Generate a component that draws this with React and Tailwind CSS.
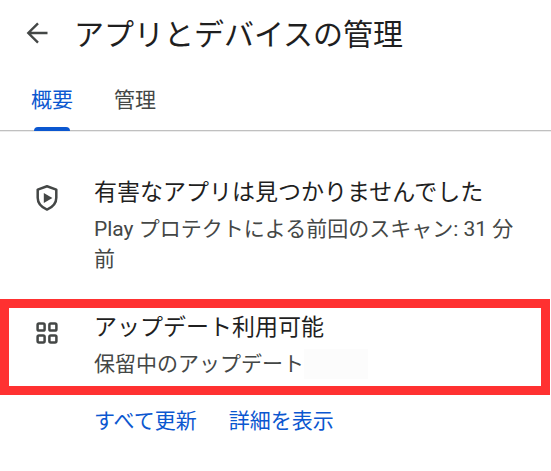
import React, { useState } from 'react';

const tabs = [
  { id: 'overview', label: '概要' },
  { id: 'manage', label: '管理' }
];

const BackIcon = () => (
  <svg className="h-6 w-6" viewBox="0 0 24 24" fill="none" stroke="currentColor" strokeWidth="2.4" aria-hidden="true">
    <path d="M21.5 12H2.5M12 2.3L2.3 12l9.7 9.7" />
  </svg>
);

const ShieldPlayIcon = () => (
  <svg className="h-7 w-6" viewBox="0 0 24 28" fill="none" aria-hidden="true">
    <path
      d="M12 2.3L21.3 5.6v8.2c0 5.2-3.8 9.5-9.3 11.8-5.5-2.3-9.3-6.6-9.3-11.8V5.6z"
      stroke="currentColor"
      strokeWidth="2.5"
      strokeLinejoin="round"
    />
    <path d="M8.8 9v10L17.4 14z" fill="currentColor" />
  </svg>
);

const AppsIcon = () => (
  <svg className="h-6 w-6" viewBox="0 0 24 24" fill="none" stroke="currentColor" strokeWidth="2.5" aria-hidden="true">
    <rect x="2.6" y="2.6" width="7" height="7" rx="1.4" />
    <rect x="14.4" y="2.6" width="7" height="7" rx="1.4" />
    <rect x="2.6" y="14.4" width="7" height="7" rx="1.4" />
    <rect x="14.4" y="14.4" width="7" height="7" rx="1.4" />
  </svg>
);

const StatusRow = ({ icon, title, children }) => (
  <div className="flex items-start gap-[35px] pt-0.5">
    <div className="mt-2 flex h-7 shrink-0 items-center text-[#444746]">{icon}</div>
    <div className="min-w-0 flex-1">
      <h2 className="text-[23px] leading-[34px] text-[#1f1f1f]">{title}</h2>
      <div className="mt-1 text-[21px] leading-[30px] text-[#444746]">{children}</div>
    </div>
  </div>
);

const App = () => {
  const [activeTab, setActiveTab] = useState('overview');

  return (
    <div className="min-h-screen bg-white font-['Roboto','Noto_Sans_CJK_JP',sans-serif]" lang="ja">
      {/* Header */}
      <header className="flex h-[70px] items-center gap-6 px-[26px]">
        <button type="button" aria-label="戻る" className="pb-1 text-[#444746]">
          <BackIcon />
        </button>
        <h1 className="text-[30px] leading-10 text-[#1f1f1f]">アプリとデバイスの管理</h1>
      </header>

      {/* Tabs */}
      <nav className="flex gap-[41px] border-b border-[#c0c0c0] px-[31px] shadow-[0_1px_0_#ececec]">
        {tabs.map((tab) => (
          <button
            key={tab.id}
            type="button"
            onClick={() => setActiveTab(tab.id)}
            className={`-mb-px flex flex-col items-center gap-[13px] pt-4 text-[21px] leading-7 ${
              activeTab === tab.id ? 'text-[#0b57d0]' : 'text-[#444746]'
            }`}
          >
            {tab.label}
            <span className={`h-1 w-9 rounded-t-full ${activeTab === tab.id ? 'bg-[#0b57d0]' : 'bg-transparent'}`} />
          </button>
        ))}
      </nav>

      <main className="pt-[43px]">
        {/* Play Protect */}
        <section className="pr-6 pb-[25px] pl-[35px]">
          <StatusRow icon={<ShieldPlayIcon />} title="有害なアプリは見つかりませんでした">
            <p>Play プロテクトによる前回のスキャン: 31 分前</p>
          </StatusRow>
        </section>

        {/* Updates */}
        <section>
          <div className="mr-px border-9 border-[#ff3131] pt-px pr-4 pb-[7px] pl-[26px]">
            <StatusRow icon={<AppsIcon />} title="アップデート利用可能">
              <p className="flex items-center">
                保留中のアップデート
                <span className="h-[30px] w-16 bg-[#fcfcfc]" />
              </p>
            </StatusRow>
          </div>
          <div className="flex gap-8 pt-2 pl-[94px] text-[21px] leading-9 text-[#0b57d0]">
            <button type="button">すべて更新</button>
            <button type="button">詳細を表示</button>
          </div>
        </section>
      </main>
    </div>
  );
};

export default App;
